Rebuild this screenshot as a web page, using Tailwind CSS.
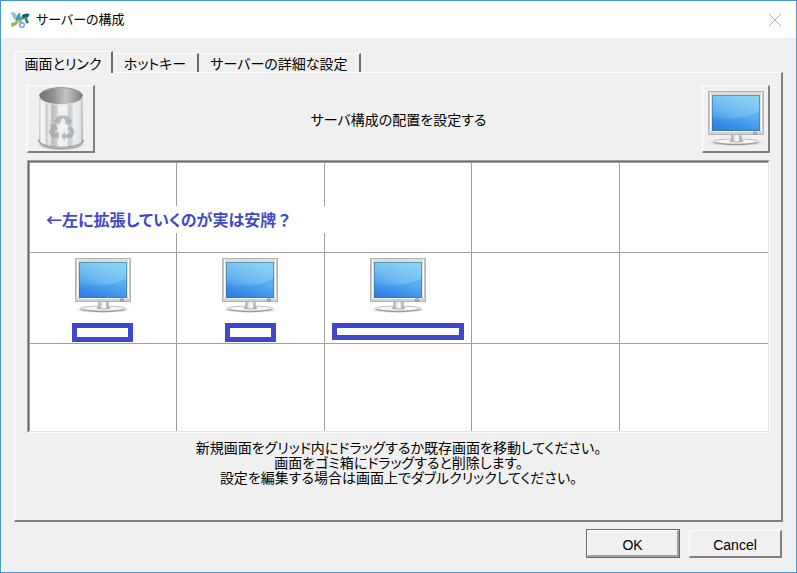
<!DOCTYPE html>
<html lang="ja">
<head>
    <meta charset="UTF-8">
    <meta name="viewport" content="width=device-width, initial-scale=1.0">
    <title>サーバーの構成</title>
    <script src="https://cdn.jsdelivr.net/npm/@tailwindcss/browser@4"></script>
</head>
<body class="font-['Noto_Sans_CJK_JP',sans-serif] [font-feature-settings:'palt'] text-sm text-black">

    <!-- 共通アイコン -->
    <svg class="absolute size-0" aria-hidden="true">
        <defs>
            <linearGradient id="screen" x1="0.7" y1="0" x2="0.3" y2="1">
                <stop offset="0" stop-color="#74c6f5"/>
                <stop offset="0.5" stop-color="#55acee"/>
                <stop offset="1" stop-color="#2f7fe6"/>
            </linearGradient>
            <linearGradient id="shine" x1="0" y1="1" x2="1" y2="0">
                <stop offset="0" stop-color="#fff" stop-opacity="0.06"/>
                <stop offset="1" stop-color="#a8ecff" stop-opacity="0.35"/>
            </linearGradient>
            <linearGradient id="frame" x1="0" y1="0" x2="0" y2="1">
                <stop offset="0" stop-color="#dcdcda"/>
                <stop offset="0.8" stop-color="#e6e6e6"/>
                <stop offset="1" stop-color="#cfcfcf"/>
            </linearGradient>
            <linearGradient id="neck" x1="0" y1="0" x2="1" y2="0">
                <stop offset="0" stop-color="#999"/>
                <stop offset="0.3" stop-color="#e2e2e2"/>
                <stop offset="0.6" stop-color="#fff"/>
                <stop offset="1" stop-color="#999"/>
            </linearGradient>
            <radialGradient id="shadow">
                <stop offset="0" stop-color="#666" stop-opacity="0.8"/>
                <stop offset="0.8" stop-color="#888" stop-opacity="0.4"/>
                <stop offset="1" stop-color="#999" stop-opacity="0"/>
            </radialGradient>
            <linearGradient id="inside" x1="0" y1="0" x2="1" y2="0">
                <stop offset="0" stop-color="#707070"/>
                <stop offset="0.3" stop-color="#8e8e8e"/>
                <stop offset="0.62" stop-color="#c4c4c4"/>
                <stop offset="1" stop-color="#7a7a7a"/>
            </linearGradient>
            <linearGradient id="can" x1="0" y1="0" x2="1" y2="0">
                <stop offset="0" stop-color="#bbb"/>
                <stop offset="0.05" stop-color="#f6f6f6"/>
                <stop offset="0.13" stop-color="#f0f0f0"/>
                <stop offset="0.16" stop-color="#cfcfcf"/>
                <stop offset="0.2" stop-color="#d5d5d5"/>
                <stop offset="0.23" stop-color="#ececec"/>
                <stop offset="0.26" stop-color="#e2e2e2"/>
                <stop offset="0.29" stop-color="#bcbcbc"/>
                <stop offset="0.4" stop-color="#cdcdcd"/>
                <stop offset="0.45" stop-color="#f2f2f2"/>
                <stop offset="0.64" stop-color="#eef0f1"/>
                <stop offset="0.67" stop-color="#c9cacb"/>
                <stop offset="0.75" stop-color="#d4d5d6"/>
                <stop offset="0.79" stop-color="#edf0f2"/>
                <stop offset="0.94" stop-color="#dfe2e4"/>
                <stop offset="1" stop-color="#aaa"/>
            </linearGradient>
        </defs>
        <symbol id="monitor" viewBox="0 0 56 55">
            <ellipse cx="28" cy="52" rx="28" ry="3" fill="url(#shadow)" fill-opacity="0.6"/>
            <ellipse cx="28" cy="50.500" rx="23" ry="2.500" fill="#f5f5f5" stroke="#b5b5b5" stroke-width="0.800"/>
            <path d="M6 51.500Q28 56 50 51.500" fill="none" stroke="#888" stroke-width="0.800"/>
            <ellipse cx="28.500" cy="50" rx="7" ry="1.500" fill="#aaa"/>
            <rect x="23.500" y="43" width="10" height="7.500" fill="url(#neck)"/>
            <rect x="0.500" y="0.500" width="55" height="43" fill="url(#frame)" stroke="#b4b4b4"/>
            <path d="M1.500 1.500V39M54.500 1.500V39" stroke="#c6c6c6"/>
            <path d="M2.500 1V40M53.500 1V40" stroke="#fff"/>
            <rect x="4" y="4" width="48" height="36" fill="url(#screen)"/>
            <path d="M4 4H52V20Q32 31 4 26Z" fill="url(#shine)"/>
            <rect x="4.500" y="4.500" width="47" height="35" fill="none" stroke="#3b7292" stroke-opacity="0.600"/>
            <path d="M5 40.500H51" stroke="#f6f6f6"/>
            <ellipse cx="47" cy="42" rx="1.700" ry="1.300" fill="#ccc" stroke="#777" stroke-width="0.800"/>
        </symbol>
        <symbol id="trash" viewBox="0 0 48 64">
            <ellipse cx="24" cy="57.500" rx="24" ry="6" fill="url(#shadow)"/>
            <path d="M1.500 53C1.500 64.500 46.500 64.500 46.500 53Z" fill="#ddd" stroke="#888" stroke-width="0.800"/>
            <path d="M2.500 9L2 53C3 62.500 45 62.500 46 53L45.500 9Z" fill="url(#can)"/>
            <path d="M2 53C3 62.500 45 62.500 46 53" fill="none" stroke="#888" stroke-width="0.800"/>
            <ellipse cx="24" cy="9.200" rx="21.800" ry="8.500" fill="url(#inside)" stroke="#e8e8e8"/>
            <path d="M2.200 9.200A21.800 8.500 0 0 1 45.800 9.200" fill="none" stroke="#777" stroke-width="0.800"/>
            <g fill="#a3a7a8" fill-opacity="0.700">
                <path d="M17 34.500L20.500 29.500Q21.500 28.500 23 28.500H29Q31 28.500 32 30.500L33.500 33L35.500 32L33 38L27 36.500L29 35.300L26 30.500L22 37.500Z"/>
                <path d="M34.500 39L37 43.500Q38 45.500 37 47L35 50Q34 51 32 51H28V54L24 49L28 44.500V47H31L34 46L31 41Z"/>
                <path d="M12 38L18.500 37L21 43L19 42L17 45.500H22V51H16.500Q15 51 14 49L12 46Q11.500 44.500 12.500 43L14 39.500Z"/>
            </g>
        </symbol>
    </svg>

    <div class="flex min-h-screen flex-col border border-[#4a98cd] bg-[#f0f0f0]">

        <!-- タイトルバー -->
        <header class="flex h-[37px] items-center bg-white pr-[15px] pl-[9px]">
            <svg class="h-[18px] w-5" viewBox="0 0 20 18" fill="none">
                <path d="M0.500 1.500L4 1L8 6L6.500 9L4 8Z" fill="#8fc3da"/>
                <path d="M8 2.500L10.500 2L10 8L6.500 11L5.500 9Z" fill="#3a9cc6"/>
                <path d="M1 12Q5 12 6.500 9L9.500 8.500Q8.500 14.500 1.500 16Z" fill="#8ac44a"/>
                <path d="M9 9Q11 4 14 3L15 5.500L11.500 10Z" fill="#56ab7c"/>
                <path d="M12.500 4Q16 1.500 19.500 3L18 6.500Q15.500 6 13 8Z" fill="#14606c"/>
                <path d="M14 6L17 7L19 12L16 12.500Z" fill="#2a8580"/>
                <circle cx="12" cy="14" r="2.300" stroke="#7c9ad4" stroke-width="1.500"/>
                <path d="M9.500 9.500L11 12" stroke="#7c9ad4" stroke-width="2"/>
            </svg>
            <h1 class="ml-[6px] flex-1 text-[13px]">サーバーの構成</h1>
            <button type="button" aria-label="閉じる" class="size-3">
                <svg class="size-3" viewBox="0 0 12 12" stroke="#b4b4b4"><path d="M0 0L12 12M12 0L0 12"/></svg>
            </button>
        </header>

        <main class="flex flex-1 flex-col px-[13px] pt-[13px] pb-[14px]">
            <!-- タブ -->
            <div role="tablist" class="flex h-[21px] items-end">
                <button type="button" role="tab" aria-selected="true" class="z-10 -mb-px h-[22px] w-[99px] rounded-tl-sm border-t border-r-2 border-l border-t-white border-r-[#6c6c6c] border-l-white bg-[#f0f0f0] leading-5">画面とリンク</button>
                <button type="button" role="tab" aria-selected="false" class="h-[19px] w-[86px] border-t border-r-2 border-t-white border-r-[#6c6c6c] leading-[18px]">ホットキー</button>
                <button type="button" role="tab" aria-selected="false" class="h-[19px] w-[162px] border-t border-r-2 border-t-white border-r-[#6c6c6c] leading-[18px]">サーバーの詳細な設定</button>
            </div>

            <section role="tabpanel" class="flex-1 border-t border-r-2 border-b-2 border-l border-t-white border-r-[#808080] border-b-[#808080] border-l-white pt-3 pr-[11px] pl-3">
                <div class="flex items-center justify-between">
                    <button type="button" aria-label="ゴミ箱" class="flex size-[68px] items-center justify-center border-t border-r-2 border-b-2 border-l border-t-white border-r-[#808080] border-b-[#808080] border-l-white">
                        <svg class="h-16 w-12"><use href="#trash"/></svg>
                    </button>
                    <p>サーバ構成の配置を設定する</p>
                    <button type="button" aria-label="新規画面" class="flex size-[68px] items-center justify-center border-t border-r-2 border-b-2 border-l border-t-white border-r-[#808080] border-b-[#808080] border-l-white">
                        <svg class="h-[55px] w-14"><use href="#monitor"/></svg>
                    </button>
                </div>

                <!-- 画面の配置グリッド -->
                <div class="relative mt-[7px] border border-t-[#a0a0a0] border-r-white border-b-white border-l-[#a0a0a0]">
                    <div class="grid grid-cols-5 grid-rows-[90px_91px_88px] border border-t-[#696969] border-r-[#e3e3e3] border-b-[#e3e3e3] border-l-[#696969] bg-white">
                        <div class="border-t border-r border-l border-[#a0a0a0]"></div>
                        <div class="border-t border-r border-[#a0a0a0]"></div>
                        <div class="border-t border-r border-[#a0a0a0]"></div>
                        <div class="border-t border-r border-[#a0a0a0]"></div>
                        <div class="border-t border-[#a0a0a0]"></div>

                        <div class="flex flex-col items-center border-t border-r border-l border-[#a0a0a0] pt-[5px]">
                            <svg class="h-[55px] w-14"><use href="#monitor"/></svg>
                            <div class="mt-[10px] h-[19px] w-[61px] border-5 border-[#3f48cc]"></div>
                        </div>
                        <div class="flex flex-col items-center border-t border-r border-[#a0a0a0] pt-[5px]">
                            <svg class="h-[55px] w-14"><use href="#monitor"/></svg>
                            <div class="mt-[10px] h-[19px] w-[51px] border-5 border-[#3f48cc]"></div>
                        </div>
                        <div class="flex flex-col items-center border-t border-r border-[#a0a0a0] pt-[5px]">
                            <svg class="h-[55px] w-14"><use href="#monitor"/></svg>
                            <div class="mt-[10px] h-[17px] w-[132px] border-5 border-[#3f48cc]"></div>
                        </div>
                        <div class="border-t border-r border-[#a0a0a0]"></div>
                        <div class="border-t border-[#a0a0a0]"></div>

                        <div class="border-t border-r border-l border-[#a0a0a0]"></div>
                        <div class="border-t border-r border-[#a0a0a0]"></div>
                        <div class="border-t border-r border-[#a0a0a0]"></div>
                        <div class="border-t border-r border-[#a0a0a0]"></div>
                        <div class="border-t border-[#a0a0a0]"></div>
                    </div>
                    <!-- 書き込みメモ -->
                    <p class="absolute top-[45px] left-[18px] w-[283px] bg-white text-base leading-[27px] font-bold text-[#3f48cc]">←左に拡張していくのが実は安牌<span class="[font-feature-settings:normal]">？</span></p>
                </div>

                <p class="mt-[7px] text-center leading-[15px]">
                    新規画面をグリッド内にドラッグするか既存画面を移動してください。<br>
                    画面をゴミ箱にドラッグすると削除します。<br>
                    設定を編集する場合は画面上でダブルクリックしてください。
                </p>
            </section>

            <div class="mt-[7px] flex justify-end gap-[9px] pr-px font-['Liberation_Sans',sans-serif] text-sm">
                <button type="button" class="h-[29px] w-[94px] border border-[#696969]">
                    <span class="flex h-full items-center justify-center border-t border-r-2 border-b-2 border-l border-t-white border-r-[#a0a0a0] border-b-[#a0a0a0] border-l-white pt-1">OK</span>
                </button>
                <button type="button" class="mt-px h-7 w-[93px] border-t border-r-2 border-b-2 border-l border-t-white border-r-[#808080] border-b-[#808080] border-l-white pt-[2px]">Cancel</button>
            </div>
        </main>
    </div>

</body>
</html>
